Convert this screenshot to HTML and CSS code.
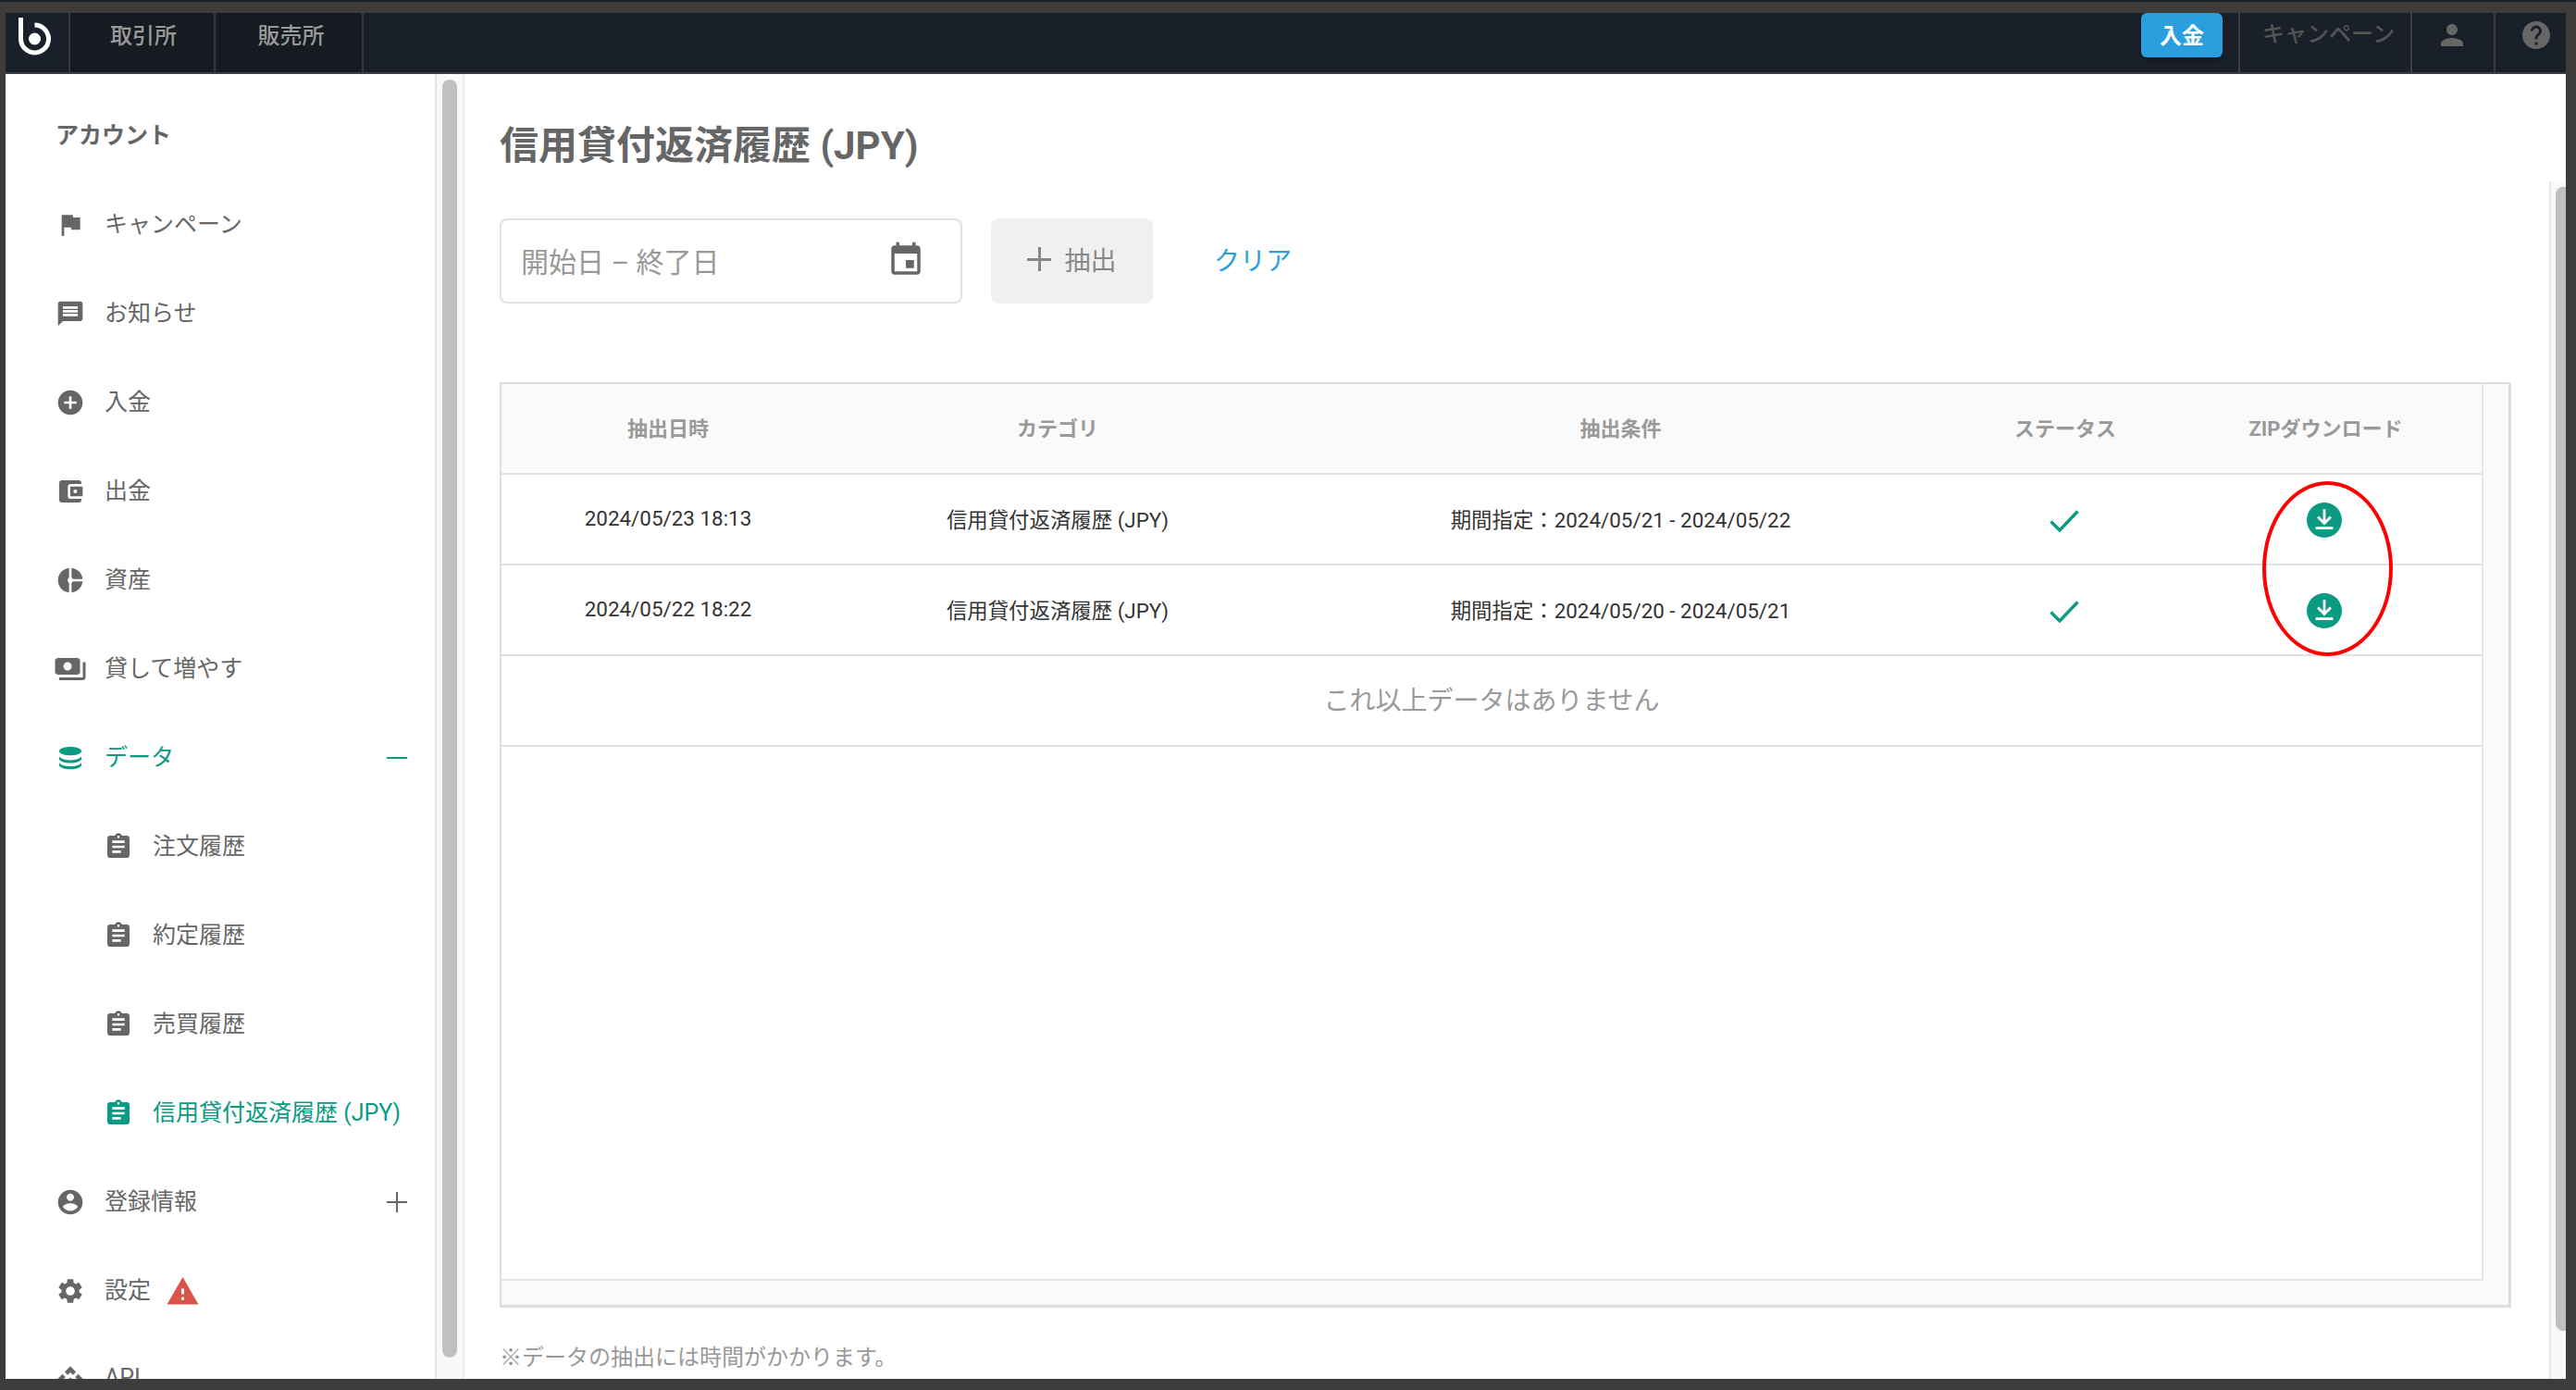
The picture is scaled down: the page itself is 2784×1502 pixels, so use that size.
FILE: index.html
```html
<!DOCTYPE html>
<html lang="ja">
<head>
  <meta charset="UTF-8" />
  <title>信用貸付返済履歴 (JPY)</title>
  <link rel="stylesheet" href="styles.css">
</head>
<body>
  <svg class="defs" aria-hidden="true">
    <symbol id="i-clip" viewBox="0 0 24 24"><path d="M19 3h-4.18C14.4 1.84 13.3 1 12 1c-1.3 0-2.4.84-2.82 2H5c-1.1 0-2 .9-2 2v14c0 1.1.9 2 2 2h14c1.1 0 2-.9 2-2V5c0-1.1-.9-2-2-2zm-7 0c.55 0 1 .45 1 1s-.45 1-1 1-1-.45-1-1 .45-1 1-1zm2 14H7v-2h7v2zm3-4H7v-2h10v2zm0-4H7V7h10v2z"/></symbol>
    <symbol id="i-check" viewBox="0 0 32 24"><path d="M1.5 12.5 11 22 30.5 1.5" fill="none" stroke="currentColor" stroke-width="3.4"/></symbol>
    <symbol id="i-down" viewBox="0 0 24 24"><circle cx="12" cy="12" r="12" fill="#0b9a82"/><path d="M12 4.6V14M7.6 9.8 12 14.2l4.4-4.4M6 17.4h12" fill="none" stroke="#fff" stroke-width="1.8"/></symbol>
  </svg>

  <div class="top-strip"></div>
  <div class="window">
    <header class="topbar">
      <a class="logo">
        <svg width="68" height="64" viewBox="0 0 68 64"><path d="M16.5 5V28a15 15 0 1 0 15-15" fill="none" stroke="#fff" stroke-width="5"/><circle cx="31.5" cy="28" r="6.5" fill="#fff"/></svg>
      </a>
      <a class="tab">取引所</a>
      <a class="tab">販売所</a>
      <div class="topbar-right">
        <a class="btn-deposit">入金</a>
        <a class="top-cell top-campaign">キャンペーン</a>
        <a class="top-cell top-user"><svg width="36" height="36" viewBox="0 0 24 24"><path d="M12 12c2.21 0 4-1.79 4-4s-1.79-4-4-4-4 1.79-4 4 1.79 4 4 4zm0 2c-2.67 0-8 1.34-8 4v2h16v-2c0-2.66-5.33-4-8-4z"/></svg></a>
        <a class="top-cell top-help"><svg width="36" height="36" viewBox="0 0 24 24"><path d="M12 2C6.48 2 2 6.48 2 12s4.48 10 10 10 10-4.48 10-10S17.52 2 12 2zm1 17h-2v-2h2v2zm2.07-7.75l-.9.92C13.45 12.9 13 13.5 13 15h-2v-.5c0-1.1.45-2.1 1.17-2.83l1.24-1.26c.37-.36.59-.86.59-1.41 0-1.1-.9-2-2-2s-2 .9-2 2H8c0-2.21 1.79-4 4-4s4 1.79 4 4c0 .88-.36 1.68-.93 2.25z"/></svg></a>
      </div>
    </header>

    <div class="page">
      <nav class="sidebar">
        <h2>アカウント</h2>
        <a class="item"><svg class="ico" viewBox="0 0 24 24"><path d="M14.4 6L14 4H5v17h2v-7h5.6l.4 2h7V6z"/></svg><span class="label">キャンペーン</span></a>
        <a class="item"><svg class="ico" viewBox="0 0 24 24"><path d="M20 2H4c-1.1 0-1.99.9-1.99 2L2 22l4-4h14c1.1 0 2-.9 2-2V4c0-1.1-.9-2-2-2zm-2 12H6v-2h12v2zm0-3H6V9h12v2zm0-3H6V6h12v2z"/></svg><span class="label">お知らせ</span></a>
        <a class="item"><svg class="ico" viewBox="0 0 24 24"><path d="M12 2C6.48 2 2 6.48 2 12s4.48 10 10 10 10-4.48 10-10S17.52 2 12 2zm5 11h-4v4h-2v-4H7v-2h4V7h2v4h4v2z"/></svg><span class="label">入金</span></a>
        <a class="item"><svg class="ico" viewBox="0 0 24 24"><path d="M21 18v1c0 1.1-.9 2-2 2H5c-1.11 0-2-.9-2-2V5c0-1.1.89-2 2-2h14c1.1 0 2 .9 2 2v1h-9c-1.11 0-2 .9-2 2v8c0 1.1.89 2 2 2h9zm-9-2h10V8H12v8zm4-2.5c-.83 0-1.5-.67-1.5-1.5s.67-1.5 1.5-1.5 1.5.67 1.5 1.5-.67 1.5-1.5 1.5z"/></svg><span class="label">出金</span></a>
        <a class="item"><svg class="ico" viewBox="0 0 24 24"><path d="M11 2v20c-5.07-.5-9-4.79-9-10s3.93-9.5 9-10zm2.03 0v8.99H22c-.47-4.74-4.24-8.52-8.97-8.99zm0 11.01V22c4.74-.47 8.5-4.25 8.97-8.99h-8.97z"/><circle cx="12" cy="12" r="2.2" fill="#fff"/></svg><span class="label">資産</span></a>
        <a class="item"><svg class="ico ico-wide" viewBox="0 0 24 24"><path d="M19 14V6c0-1.1-.9-2-2-2H3c-1.1 0-2 .9-2 2v8c0 1.1.9 2 2 2h14c1.1 0 2-.9 2-2zm-9-1c-1.66 0-3-1.34-3-3s1.34-3 3-3 3 1.34 3 3-1.34 3-3 3zm13-6v11c0 1.1-.9 2-2 2H4v-2h17V7h2z"/></svg><span class="label">貸して増やす</span></a>
        <a class="item active"><svg class="ico" viewBox="0 0 24 24"><ellipse cx="12" cy="6.5" rx="9" ry="3.5"/><path d="M3 10.4c0 1.9 4 3.4 9 3.4s9-1.5 9-3.4v2.4c0 1.9-4 3.4-9 3.4s-9-1.5-9-3.4zM3 15.4c0 1.9 4 3.4 9 3.4s9-1.5 9-3.4v2.4c0 1.9-4 3.4-9 3.4s-9-1.5-9-3.4z"/></svg><span class="label">データ</span><span class="toggle minus"></span></a>
        <a class="item sub"><svg class="ico"><use href="#i-clip"/></svg><span class="label">注文履歴</span></a>
        <a class="item sub"><svg class="ico"><use href="#i-clip"/></svg><span class="label">約定履歴</span></a>
        <a class="item sub"><svg class="ico"><use href="#i-clip"/></svg><span class="label">売買履歴</span></a>
        <a class="item sub active"><svg class="ico"><use href="#i-clip"/></svg><span class="label">信用貸付返済履歴 (JPY)</span></a>
        <a class="item"><svg class="ico" viewBox="0 0 24 24"><path d="M12 2C6.48 2 2 6.48 2 12s4.48 10 10 10 10-4.48 10-10S17.52 2 12 2zm0 3c1.66 0 3 1.34 3 3s-1.34 3-3 3-3-1.34-3-3 1.34-3 3-3zm0 14.2c-2.5 0-4.71-1.28-6-3.22.03-1.99 4-3.08 6-3.08 1.99 0 5.97 1.09 6 3.08-1.29 1.94-3.5 3.22-6 3.22z"/></svg><span class="label">登録情報</span><span class="toggle plus"></span></a>
        <a class="item"><svg class="ico" viewBox="0 0 24 24"><path d="M19.14 12.94c.04-.3.06-.61.06-.94 0-.32-.02-.64-.07-.94l2.03-1.58c.18-.14.23-.41.12-.61l-1.92-3.32c-.12-.22-.37-.29-.59-.22l-2.39.96c-.5-.38-1.03-.7-1.62-.94l-.36-2.54c-.04-.24-.24-.41-.48-.41h-3.84c-.24 0-.43.17-.47.41l-.36 2.54c-.59.24-1.13.57-1.62.94l-2.39-.96c-.22-.08-.47 0-.59.22L2.74 8.87c-.12.21-.08.47.12.61l2.03 1.58c-.05.3-.09.63-.09.94s.02.64.07.94l-2.03 1.58c-.18.14-.23.41-.12.61l1.92 3.32c.12.22.37.29.59.22l2.39-.96c.5.38 1.03.7 1.62.94l.36 2.54c.05.24.24.41.48.41h3.84c.24 0 .44-.17.47-.41l.36-2.54c.59-.24 1.13-.56 1.62-.94l2.39.96c.22.08.47 0 .59-.22l1.92-3.32c.12-.22.07-.47-.12-.61l-2.01-1.58zM12 15.6c-1.98 0-3.6-1.62-3.6-3.6s1.62-3.6 3.6-3.6 3.6 1.62 3.6 3.6-1.62 3.6-3.6 3.6z"/></svg><span class="label">設定</span><svg class="warn" viewBox="0 0 24 24"><path d="M1 21h22L12 2 1 21zm12-3h-2v-2h2v2zm0-4h-2v-4h2v4z"/></svg></a>
        <a class="item"><svg class="ico" viewBox="0 0 24 24"><path d="M14 12l-2 2-2-2 2-2 2 2zm-2-6l2.12 2.12 2.5-2.5L12 1 7.38 5.62l2.5 2.5L12 6zm-6 6l2.12-2.12-2.5-2.5L1 12l4.62 4.62 2.5-2.5L6 12zm12 0l-2.12 2.12 2.5 2.5L23 12l-4.62-4.62-2.5 2.5L18 12zm-6 6l-2.12-2.12-2.5 2.5L12 23l4.62-4.62-2.5-2.5L12 18z"/></svg><span class="label">API</span></a>
      </nav>
      <div class="side-scroll"><div class="side-thumb"></div></div>

      <main class="main">
        <div class="content">
          <h1>信用貸付返済履歴 (JPY)</h1>

          <div class="filters">
            <div class="date-input">
              <span>開始日 – 終了日</span>
              <svg width="42" height="42" viewBox="0 0 24 24"><path d="M17 12h-5v5h5v-5zM16 1v2H8V1H6v2H5c-1.11 0-1.99.9-1.99 2L3 19c0 1.1.89 2 2 2h14c1.1 0 2-.9 2-2V5c0-1.1-.9-2-2-2h-1V1h-2zm3 18H5V8h14v11z"/></svg>
            </div>
            <button class="btn-extract"><span class="btn-plus"></span>抽出</button>
            <a class="clear">クリア</a>
          </div>

          <div class="table">
            <div class="table-body">
              <div class="row row-head">
                <div>抽出日時</div>
                <div>カテゴリ</div>
                <div>抽出条件</div>
                <div>ステータス</div>
                <div>ZIPダウンロード</div>
              </div>
              <div class="row">
                <div>2024/05/23 18:13</div>
                <div>信用貸付返済履歴 (JPY)</div>
                <div>期間指定：2024/05/21 - 2024/05/22</div>
                <div><svg class="check"><use href="#i-check"/></svg></div>
                <div><svg class="download"><use href="#i-down"/></svg></div>
              </div>
              <div class="row">
                <div>2024/05/22 18:22</div>
                <div>信用貸付返済履歴 (JPY)</div>
                <div>期間指定：2024/05/20 - 2024/05/21</div>
                <div><svg class="check"><use href="#i-check"/></svg></div>
                <div><svg class="download"><use href="#i-down"/></svg></div>
              </div>
              <div class="no-more">これ以上データはありません</div>
            </div>
          </div>

          <p class="note">※データの抽出には時間がかかります。</p>
        </div>
        <div class="main-scroll"><div class="main-thumb"></div></div>
        <div class="annotation"></div>
      </main>
    </div>
  </div>
</body>
</html>
```

FILE: styles.css
```css
html, body {
  margin: 0;
  height: 100%;
  overflow: hidden;
}
body {
  background-color: #3d3c3a;
  font-family: Roboto, "Noto Sans CJK JP", sans-serif;
  color: #666;
}
.defs {
  position: absolute;
  width: 0;
  height: 0;
}
.top-strip {
  height: 2px;
  background-color: #1a202a;
}
.window {
  margin: 12px 11px 0 6px;
  height: 1476px;
  display: flex;
  flex-direction: column;
  overflow: hidden;
  background: white;
}

/* top bar */
.topbar {
  display: flex;
  flex: none;
  height: 66px;
  box-sizing: border-box;
  background-color: #1a202a;
  border-bottom: 2px solid #3a3e47;
}
.logo {
  width: 68px;
  border-right: 2px solid #333843;
}
.logo svg {
  display: block;
}
.tab {
  width: 157px;
  display: flex;
  align-items: center;
  justify-content: center;
  padding: 0 0 20px 3px;
  box-sizing: border-box;
  font-size: 24px;
  font-weight: 500;
  color: #999;
  background-color: #161a21;
  border-right: 2px solid #333843;
}
.tab + .tab {
  margin-left: 2px;
  width: 158px;
}
.topbar-right {
  margin-left: auto;
  display: flex;
}
.btn-deposit {
  width: 88px;
  height: 48px;
  margin-right: 17px;
  padding-bottom: 3px;
  box-sizing: border-box;
  display: flex;
  align-items: center;
  justify-content: center;
  font-size: 24px;
  font-weight: 700;
  color: white;
  background-color: #2b9fde;
  border-radius: 6px;
  box-shadow: 0 2px 6px rgba(0, 0, 0, 0.3);
}
.top-cell {
  display: flex;
  align-items: center;
  justify-content: center;
  border-left: 2px solid #3a3e47;
  box-sizing: border-box;
  color: #666;
}
.top-cell svg {
  fill: #666;
  margin-top: -16px;
}
.top-campaign {
  width: 186px;
  padding: 0 0 23px 7px;
  font-size: 24px;
  font-weight: 500;
  color: #555;
}
.top-user {
  width: 90px;
  padding-right: 3px;
}
.top-help {
  width: 78px;
  padding-left: 12px;
}

/* sidebar */
.page {
  flex: 1;
  display: flex;
  min-height: 0;
}
.sidebar {
  width: 464px;
  flex: none;
  padding-top: 19px;
  box-sizing: border-box;
  overflow: hidden;
}
.sidebar h2 {
  margin: 0;
  height: 96px;
  line-height: 96px;
  padding-left: 54px;
  font-size: 25px;
  font-weight: 700;
  color: #666;
}
.item {
  display: flex;
  align-items: center;
  height: 96px;
  padding: 0 30px 0 54px;
  font-size: 25px;
  color: #666;
}
.item .label {
  padding-bottom: 6px;
}
.item .ico {
  width: 32px;
  height: 32px;
  margin-right: 21px;
  flex: none;
  fill: #666;
}
.item .ico-wide {
  width: 36px;
  height: 36px;
  margin: 0 19px 0 -2px;
}
.item.sub {
  padding-left: 106px;
}
.item.active {
  color: #0b9a82;
}
.item.active .ico {
  fill: #0b9a82;
}
.toggle {
  margin-left: auto;
  position: relative;
  width: 22px;
  height: 22px;
}
.toggle::before,
.plus::after {
  content: "";
  position: absolute;
  background-color: currentColor;
}
.toggle::before {
  left: 0;
  right: 0;
  top: 10px;
  height: 2px;
}
.plus::after {
  top: 0;
  bottom: 0;
  left: 10px;
  width: 2px;
}
.warn {
  width: 37px;
  height: 37px;
  margin-left: 16px;
  fill: #dc5349;
}
.side-scroll {
  width: 30px;
  flex: none;
  box-sizing: border-box;
  padding: 6px 6px 0;
  background-color: #f9f9f9;
  border-left: 2px solid #e6e6e6;
}
.side-thumb {
  height: 1381px;
  background-color: #c0c0c0;
  border-radius: 8px;
}

/* main */
.main {
  flex: 1;
  display: flex;
  position: relative;
  border-left: 2px solid #ececec;
  min-width: 0;
}
.content {
  flex: 1;
  padding-left: 38px;
  min-width: 0;
}
.content h1 {
  margin: 50px 0 0;
  line-height: 56px;
  font-size: 42px;
  font-weight: 700;
  color: #666;
}
.filters {
  display: flex;
  align-items: center;
  margin-top: 50px;
  height: 92px;
}
.date-input {
  width: 500px;
  height: 92px;
  box-sizing: border-box;
  display: flex;
  align-items: center;
  justify-content: space-between;
  padding: 0 38px 2px 21px;
  border: 2px solid #e0e0e0;
  border-radius: 8px;
  font-size: 30px;
  color: #999;
}
.date-input svg {
  fill: #666;
  margin-top: -1px;
}
.btn-extract {
  width: 175px;
  height: 92px;
  margin-left: 31px;
  display: flex;
  align-items: center;
  justify-content: center;
  border: none;
  border-radius: 8px;
  background-color: #f0f0f0;
  font-family: inherit;
  font-size: 28px;
  color: #888;
  padding: 0 0 4px;
}
.btn-plus {
  position: relative;
  width: 26px;
  height: 26px;
  margin-right: 14px;
}
.btn-plus::before,
.btn-plus::after {
  content: "";
  position: absolute;
  background-color: #888;
}
.btn-plus::before {
  left: 0;
  right: 0;
  top: 12px;
  height: 3px;
}
.btn-plus::after {
  top: 0;
  bottom: 0;
  left: 12px;
  width: 3px;
}
.clear {
  margin-left: 66px;
  font-size: 28px;
  color: #2b9fde;
  padding-bottom: 4px;
}

/* table */
.table {
  width: 2174px;
  height: 1000px;
  margin-top: 85px;
  box-sizing: border-box;
  padding: 0 27px 26px 0;
  background-color: #fafafa;
  border: solid #ddd;
  border-width: 2px 3px 3px 2px;
}
.table-body {
  height: 100%;
  box-sizing: border-box;
  background: white;
  border: solid #e6e6e6;
  border-width: 0 2px 2px 0;
}
.row {
  display: grid;
  grid-template-columns: 360px 482px 735px 226px 337px;
  height: 98px;
  box-sizing: border-box;
  align-items: center;
  text-align: center;
  font-size: 22.4px;
  color: #333;
  border-bottom: 2px solid #e0e0e0;
}
.row > div {
  display: flex;
  align-items: center;
  justify-content: center;
  padding-bottom: 2px;
}
.row-head {
  background-color: #fafafa;
  font-size: 22px;
  font-weight: 700;
  color: #999;
}
.row-head > div {
  padding-bottom: 4px;
}
.check {
  width: 32px;
  height: 24px;
  color: #0b9a82;
  margin: 6px 2px 0 0;
}
.download {
  width: 38px;
  height: 38px;
  margin: 4px 4px 0 0;
}
.no-more {
  height: 98px;
  box-sizing: border-box;
  display: flex;
  align-items: center;
  justify-content: center;
  padding-bottom: 4px;
  font-size: 28px;
  color: #999;
  border-bottom: 2px solid #e0e0e0;
}
.note {
  margin: 38px 0 0;
  line-height: 32px;
  font-size: 24px;
  color: #999;
}
.main-scroll {
  width: 18px;
  flex: none;
  margin-top: 116px;
  box-sizing: border-box;
  padding: 6px 0 0 5px;
  background-color: #f9f9f9;
  border-left: 2px solid #e6e6e6;
}
.main-thumb {
  height: 1236px;
  background-color: #c0c0c0;
  border-radius: 8px 0 0 8px;
}

/* hand-drawn mark over the table */
.annotation {
  position: absolute;
  left: 1943px;
  top: 440px;
  width: 141px;
  height: 189px;
  box-sizing: border-box;
  border: 4px solid #f00;
  border-radius: 50%;
}
```
